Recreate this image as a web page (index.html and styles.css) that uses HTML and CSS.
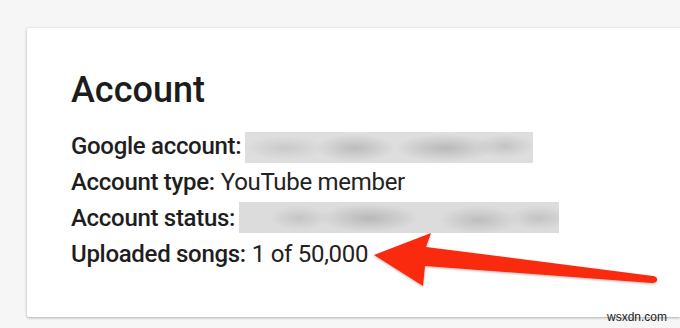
FILE: index.html
```html
<!DOCTYPE html>
<html>
<head>
<meta charset="utf-8">
<link rel="stylesheet" href="styles.css">
</head>
<body>
<div class="page">
  <section class="card">
    <h1 class="title">Account</h1>
    <div class="rows">
      <div class="row"><span class="label">Google account:</span><span class="blur blur-a"></span></div>
      <div class="row"><span class="label">Account type:</span><span class="value">YouTube member</span></div>
      <div class="row"><span class="label">Account status:</span><span class="blur blur-b"></span></div>
      <div class="row"><span class="label">Uploaded songs:</span><span class="value">1 of 50,000</span></div>
    </div>
  </section>
  <svg class="arrow" width="680" height="328" viewBox="0 0 680 328">
    <defs>
      <filter id="sh" x="-10%" y="-30%" width="120%" height="160%">
        <feDropShadow dx="0" dy="1" stdDeviation="1.2" flood-color="#000" flood-opacity="0.3"/>
      </filter>
    </defs>
    <path filter="url(#sh)" fill="#f92a0e" d="M374 255 L431 233 L426 247 L653 276 Q658 277 657 280.5 Q656 283 652 283 L425 266 L423 286 Z"/>
  </svg>
  <div class="mark">wsxdn.com</div>
</div>
</body>
</html>
```
FILE: styles.css
```css
html, body {
  margin: 0;
  padding: 0;
}
body {
  background: #f6f6f6;
  width: 680px;
  height: 328px;
  overflow: hidden;
  font-family: Roboto, "Liberation Sans", sans-serif;
  color: #202020;
}
.page {
  position: relative;
  width: 680px;
  height: 328px;
  padding: 28px 0 0 27px;
  box-sizing: border-box;
  overflow: hidden;
}
.card {
  background: #fff;
  width: 653px;
  height: 289px;
  box-sizing: border-box;
  padding: 44px 0 0 44px;
  border-radius: 2px 0 0 2px;
  box-shadow: 0 1px 3px rgba(0,0,0,0.28), 0 0 2px rgba(0,0,0,0.08);
}
.title {
  margin: 0;
  font-size: 36px;
  line-height: 36px;
  font-weight: 500;
  color: #1c1c1c;
}
.rows {
  margin-top: 20px;
  display: flex;
  flex-direction: column;
}
.row {
  display: flex;
  align-items: center;
  height: 36px;
  font-size: 24px;
  line-height: 36px;
  letter-spacing: -0.3px;
}
.label {
  font-weight: 500;
  color: #1e1e1e;
}
.value {
  margin-left: 6px;
  font-weight: 400;
  color: #222;
}
.blur {
  display: block;
  height: 31px;
  margin-left: 4px;
}
.blur-a {
  width: 288px;
  margin-top: 3px;
  background:
    radial-gradient(ellipse 40px 14px at 110px 16px, rgba(160,160,160,0.55), transparent),
    radial-gradient(ellipse 50px 14px at 200px 16px, rgba(155,155,155,0.55), transparent),
    radial-gradient(ellipse 30px 12px at 260px 14px, rgba(165,165,165,0.45), transparent),
    radial-gradient(ellipse 40px 12px at 40px 16px, rgba(170,170,170,0.4), transparent),
    #dedede;
}
.blur-b {
  width: 320px;
  margin-top: -1px;
  background:
    radial-gradient(ellipse 50px 14px at 130px 16px, rgba(155,155,155,0.55), transparent),
    radial-gradient(ellipse 30px 12px at 60px 16px, rgba(170,170,170,0.45), transparent),
    radial-gradient(ellipse 40px 14px at 240px 18px, rgba(160,160,160,0.5), transparent),
    radial-gradient(ellipse 30px 12px at 300px 16px, rgba(165,165,165,0.45), transparent),
    #dcdcdc;
}
.arrow {
  position: absolute;
  left: 0;
  top: 0;
  pointer-events: none;
}
.mark {
  position: absolute;
  left: 607px;
  top: 309px;
  font-family: "Liberation Sans", Arial, sans-serif;
  font-size: 12px;
  line-height: 16px;
  color: #222;
}
```
